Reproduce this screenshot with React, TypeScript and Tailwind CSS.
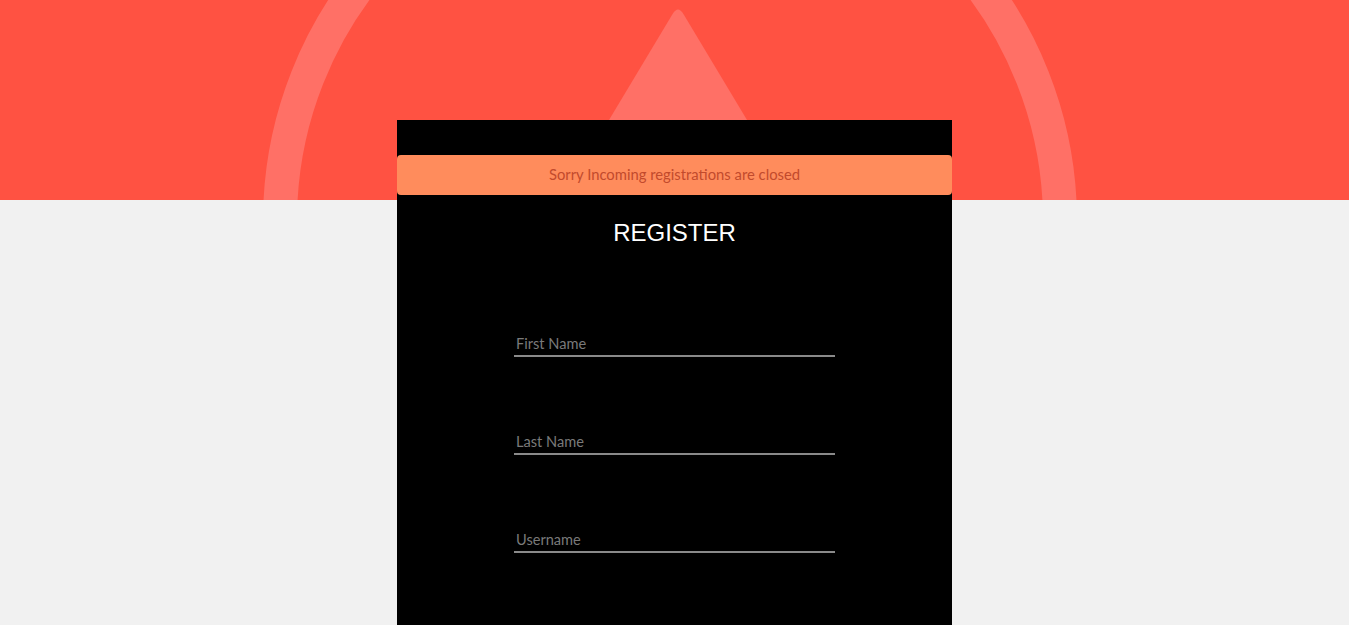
import React from "react";

export default function App() {
  const fields = ["First Name", "Last Name", "Username"];
  return (
    <div className="min-h-screen bg-[#f1f1f1] font-['Lato',sans-serif] overflow-hidden">
      <div className="relative h-[200px] bg-[#ff5242] overflow-hidden">
        <svg
          className="absolute left-0 top-0"
          width="1349"
          height="200"
          viewBox="0 0 1349 200"
        >
          <circle cx="670" cy="221" r="390" fill="none" stroke="#ff7066" strokeWidth="34" />
          <path
            d="M 672.6 14 Q 678 5 683.4 14 L 873 330 L 483 330 Z"
            fill="#ff7066"
          />
        </svg>
      </div>
      <div className="relative z-10 mx-auto -mt-[80px] w-[555px] h-[560px] bg-black pt-[35px]">
        <div className="h-[40px] pb-[2px] rounded-[4px] bg-[#ff8c5c] flex items-center justify-center text-[14.8px] text-[#c24a2c]">
          Sorry Incoming registrations are closed
        </div>
        <h1 className="mt-[22px] text-center text-white text-[24px] leading-[32px] font-['Liberation_Sans',Arial,sans-serif]">
          REGISTER
        </h1>
        <div className="mt-[78px] flex flex-col gap-[68px] items-center">
          {fields.map((f) => (
            <input
              key={f}
              placeholder={f}
              className="w-[321px] h-[30px] pt-[4px] pl-[2px] bg-transparent border-b-2 border-[#8a8a8a] text-[14.6px] text-white placeholder:text-[#7a7a7a] outline-none"
            />
          ))}
        </div>
      </div>
    </div>
  );
}
